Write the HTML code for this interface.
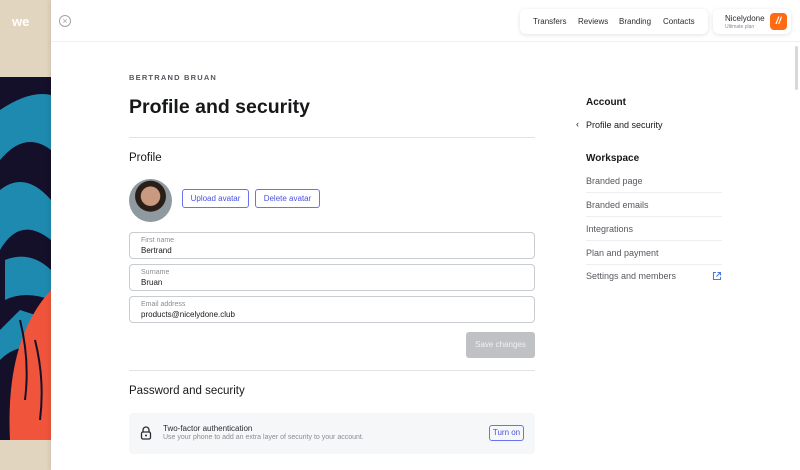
<!DOCTYPE html>
<html><head><style>
*{box-sizing:border-box;margin:0;padding:0}
body{width:800px;height:470px;overflow:hidden;background:#fff;font-family:"Liberation Sans",sans-serif;color:#17181a;position:relative}
.abs{position:absolute}
.field{position:absolute;left:129px;width:406px;height:27px;border:1px solid #c9ccd0;border-radius:4px}
.field .l{position:absolute;left:11px;top:4px;font-size:7px;color:#8a8d92}
.field .v{position:absolute;left:11px;top:13px;font-size:8px;color:#17181a}
.btn{position:absolute;height:19px;border:1px solid #6b72f0;border-radius:3px;color:#4a52e0;font-size:8px;text-align:center;line-height:17px}
.nav{position:absolute;left:586px;width:136px;font-size:9px;color:#55585e;border-bottom:1px solid #eceef0;height:24px;line-height:24px}
</style></head><body>
<svg class="abs" style="left:0;top:0" width="52" height="470">
<rect width="52" height="470" fill="#e2d5bf"/>
<rect x="0" y="77" width="51" height="363" fill="#15102a"/>
<path d="M0 110 Q30 90 51 95 L51 150 Q25 130 0 160Z" fill="#1e8ab0"/>
<path d="M0 190 Q25 170 51 200 L51 240 Q20 215 0 250Z" fill="#1e8ab0"/>
<path d="M5 260 Q30 250 51 270 L51 300 Q25 290 5 300Z" fill="#1e8ab0"/>
<path d="M0 330 L20 310 L51 320 L51 350 Q20 340 0 360Z" fill="#1e8ab0"/>
<path d="M10 440 Q5 340 51 290 L51 440Z" fill="#f0553c"/>
<path d="M20 320 Q30 360 25 400 M35 340 Q45 380 40 420" stroke="#15102a" stroke-width="2" fill="none"/>
<text x="12" y="26" font-family="Liberation Sans" font-weight="bold" font-size="13" fill="#fff">we</text>
</svg>
<div class="abs" style="left:51px;top:0;width:749px;height:470px;background:#fff;box-shadow:-2px 0 4px rgba(0,0,0,.08)"></div>
<div class="abs" style="left:51px;top:41px;width:749px;height:1px;background:#f0f0f0"></div>
<div class="abs" style="left:59px;top:15px;width:12px;height:12px;border:1px solid #a0a3a8;border-radius:50%;color:#a0a3a8;font-size:9px;line-height:10px;text-align:center">×</div>
<div class="abs" style="left:520px;top:9px;width:188px;height:25px;border-radius:6px;box-shadow:0 1px 4px rgba(0,0,0,.12);font-size:8px;color:#2a2c30;line-height:25px">
<span class="abs" style="left:13px">Transfers</span><span class="abs" style="left:58px">Reviews</span><span class="abs" style="left:99px">Branding</span><span class="abs" style="left:143px">Contacts</span></div>
<div class="abs" style="left:713px;top:9px;width:78px;height:25px;border-radius:6px;box-shadow:0 1px 4px rgba(0,0,0,.12)">
<div class="abs" style="left:12px;top:5px;font-size:8px;color:#2a2c30">Nicelydone</div>
<div class="abs" style="left:12px;top:15px;font-size:5px;color:#8a8d92">Ultimate plan</div>
<div class="abs" style="left:57px;top:4px;width:17px;height:17px;border-radius:4px;background:#ff6a13;color:#fff;font-size:10px;font-weight:bold;text-align:center;line-height:17px;font-style:italic">//</div></div>
<div class="abs" style="left:795px;top:46px;width:3px;height:44px;background:#d8d8d8;border-radius:2px"></div>
<div class="abs" style="left:129px;top:73px;font-size:7.5px;letter-spacing:1.2px;font-weight:bold;color:#55585e">BERTRAND BRUAN</div>
<div class="abs" style="left:129px;top:96px;font-size:19.5px;font-weight:bold">Profile and security</div>
<div class="abs" style="left:129px;top:137px;width:406px;height:1px;background:#e2e4e7"></div>
<div class="abs" style="left:129px;top:152px;font-size:11.5px">Profile</div>
<div class="abs" style="left:129px;top:179px;width:43px;height:43px;border-radius:50%;background:radial-gradient(circle at 50% 40%,#c99a80 0 28%,#2a1e18 30% 45%,#8e9aa0 47%)"></div>
<div class="btn" style="left:182px;top:189px;width:67px">Upload avatar</div>
<div class="btn" style="left:255px;top:189px;width:65px">Delete avatar</div>
<div class="field" style="top:232px"><div class="l">First name</div><div class="v">Bertrand</div></div>
<div class="field" style="top:264px"><div class="l">Surname</div><div class="v">Bruan</div></div>
<div class="field" style="top:296px"><div class="l">Email address</div><div class="v">products@nicelydone.club</div></div>
<div class="abs" style="left:466px;top:332px;width:69px;height:26px;background:#bfc1c4;border-radius:3px;color:#eef0f2;font-size:8px;text-align:center;line-height:26px">Save changes</div>
<div class="abs" style="left:129px;top:370px;width:406px;height:1px;background:#e2e4e7"></div>
<div class="abs" style="left:129px;top:385px;font-size:11.5px">Password and security</div>
<div class="abs" style="left:129px;top:413px;width:406px;height:41px;background:#f5f7f9;border-radius:4px">
<svg class="abs" style="left:11px;top:13px" width="12" height="14"><path d="M3 6V4a3 3 0 0 1 6 0v2" stroke="#2a2c30" stroke-width="1.3" fill="none"/><rect x="1.5" y="6" width="9" height="7" rx="1.5" stroke="#2a2c30" stroke-width="1.3" fill="none"/><circle cx="6" cy="9.5" r="1" fill="#2a2c30"/></svg>
<div class="abs" style="left:34px;top:11px;font-size:8px;color:#2a2c30">Two-factor authentication</div>
<div class="abs" style="left:34px;top:21px;font-size:7px;color:#8a8d92">Use your phone to add an extra layer of security to your account.</div>
<div class="btn" style="left:360px;top:12px;width:35px;height:16px;line-height:14px">Turn on</div></div>
<div class="abs" style="left:586px;top:97px;font-size:10px;font-weight:bold">Account</div>
<div class="abs" style="left:576px;top:119px;font-size:9px;color:#17181a">‹</div>
<div class="abs" style="left:586px;top:120px;font-size:9px;color:#17181a">Profile and security</div>
<div class="abs" style="left:586px;top:153px;font-size:10px;font-weight:bold">Workspace</div>
<div class="nav" style="top:169px">Branded page</div>
<div class="nav" style="top:193px">Branded emails</div>
<div class="nav" style="top:217px">Integrations</div>
<div class="nav" style="top:241px">Plan and payment</div>
<div class="nav" style="top:264px;border:0">Settings and members</div>
<svg class="abs" style="left:712px;top:271px" width="10" height="10"><path d="M4 1.5H1.5v7h7V6M5.5 1.5h3v3M8.5 1.5L4.5 5.5" stroke="#4a7ae0" stroke-width="1.1" fill="none"/></svg>
</body></html>
